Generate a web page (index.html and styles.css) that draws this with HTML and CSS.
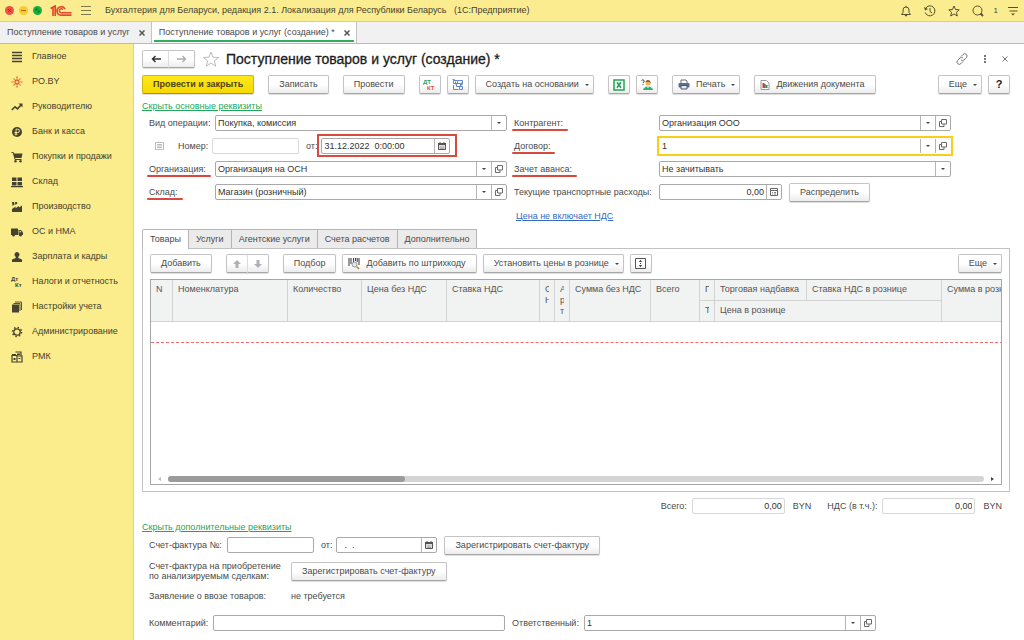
FILE: index.html
```html
<!DOCTYPE html>
<html lang="ru">
<head>
<meta charset="utf-8">
<title>Поступление товаров и услуг (создание) *</title>
<link rel="stylesheet" href="styles.css">
</head>
<body>
<svg class="sprite" aria-hidden="true">
  <symbol id="i-open" viewBox="0 0 8 8"><path d="M2.500 .5h5v4.500h-5zM2.500 2.500h-2v5h4.500V5" fill="none" stroke="#6a6a6a"/></symbol>
  <symbol id="i-cal" viewBox="0 0 8 8"><path d="M.5 1.500h7v6h-7z" fill="#ddd" stroke="#555"/><path d="M0 1h8v2H0zM1.500 0h1v1h-1zM5.500 0h1v1h-1z" fill="#555"/><path d="M2 5h4M2 6.500h4" stroke="#888" stroke-width=".6"/></symbol>
  <symbol id="i-calc" viewBox="0 0 8 8"><path d="M.5 .5h7v7h-7zM.5 2.500h7" fill="none" stroke="#666"/><path d="M2 4.500h1M4 4.500h2M2 6h1M4 6h2" stroke="#666" stroke-width=".8"/></symbol>
</svg>

<header class="topbar">
  <div class="lights">
    <svg width="9" height="9" viewBox="0 0 9 9"><circle cx="4.500" cy="4.500" r="4.500" fill="#ee5244"/><path d="M3 3l3 3M6 3l-3 3" stroke="#a92c22"/></svg>
    <svg width="9" height="9" viewBox="0 0 9 9"><circle cx="4.500" cy="4.500" r="4.500" fill="#f5cb30"/><path d="M2 4.500h5" stroke="#b5651d"/></svg>
    <svg width="9" height="9" viewBox="0 0 9 9"><circle cx="4.500" cy="4.500" r="4.500" fill="#16b03c"/><path d="M3 3h1.500M3 3v1.500M6 6H4.500M6 6V4.500" stroke="#0a5a1c"/></svg>
  </div>
  <svg class="logo" viewBox="0 0 22 12" aria-label="1С"><g fill="none" stroke="#e5482f"><path d="M.5 3.500L3 2.200V11M5.200 11V1L3 2.200" stroke-width="1.700"/><path d="M15 4.200A4.200 4.200 0 1 0 11 10.200H21.500" stroke-width="1.700"/><path d="M12.900 4.600A2 2 0 1 0 11 7.800H21.500" stroke-width="1.500"/></g></svg>
  <button class="plain" aria-label="Меню"><svg width="10" height="9" viewBox="0 0 10 9"><path d="M0 .5h10M0 4.500h10M0 8.500h10" stroke="#7d794e"/></svg></button>
  <span class="app-title">Бухгалтерия для Беларуси, редакция 2.1. Локализация для Республики Беларусь &nbsp; (1С:Предприятие)</span>
  <div class="top-tools">
    <button class="plain" aria-label="Уведомления"><svg width="12" height="12" viewBox="0 0 12 12"><path d="M1.500 9.500L3 7.500V5a3 3 0 0 1 6 0v2.500l1.500 2zM6 2V.8" fill="none" stroke="#55512f"/><path d="M4.500 10h3L6 11.800z" fill="#55512f"/></svg></button>
    <button class="plain" aria-label="История"><svg width="12" height="12" viewBox="0 0 12 12"><path d="M1.500 3.500A5 5 0 1 1 1.200 7.500M6 3v3.500l2 1.500" fill="none" stroke="#55512f"/><path d="M0 2l1 3.500 3-1.500z" fill="#55512f"/></svg></button>
    <button class="plain" aria-label="Избранное"><svg width="12" height="12" viewBox="0 0 12 12"><path d="M6 1l1.500 3.500 3.700.3-2.800 2.500.9 3.700L6 9l-3.300 2 .9-3.700L.8 4.800l3.700-.3z" fill="none" stroke="#55512f"/></svg></button>
    <button class="plain" aria-label="Поиск"><svg width="12" height="12" viewBox="0 0 12 12"><circle cx="5.500" cy="5.500" r="4.500" fill="none" stroke="#55512f"/><path d="M8.500 8.500l2.500 2.500" stroke="#55512f" stroke-width="2"/></svg></button>
    <span class="count">1</span>
    <button class="plain" aria-label="Сервис"><svg width="10" height="10" viewBox="0 0 10 10"><path d="M0 1.500h10M1.500 5h8" stroke="#55512f"/><path d="M3 7.500h4L5 9.500z" fill="#55512f"/></svg></button>
  </div>
</header>

<nav class="windows">
  <div class="window"><a href="#">Поступление товаров и услуг</a><button class="close" aria-label="Закрыть"><svg width="6" height="6" viewBox="0 0 6 6"><path d="M.5 .5l5 5M5.500 .5l-5 5" stroke="#555" stroke-width="1.500"/></svg></button></div>
  <div class="window current"><a href="#">Поступление товаров и услуг (создание) *</a><button class="close" aria-label="Закрыть"><svg width="6" height="6" viewBox="0 0 6 6"><path d="M.5 .5l5 5M5.500 .5l-5 5" stroke="#555" stroke-width="1.500"/></svg></button></div>
</nav>

<div class="workspace">
<nav class="sections">
  <a href="#"><svg viewBox="0 0 12 12"><path d="M1 1.500h10M1 4.500h10M1 7.500h10M1 10.500h10" stroke="#454232" stroke-width="1.400"/></svg>Главное</a>
  <a href="#"><svg viewBox="0 0 12 12"><path d="M6 5V.5M6 7v4.500M5 6H.5M7 6h4.500M5.200 5.200L2.500 2.500M6.800 5.200l2.700-2.700M5.200 6.800L2.500 9.500M6.800 6.800l2.700 2.700" stroke="#e5532d" stroke-width="1.200" stroke-dasharray="2.600 .5"/></svg>PO.BY</a>
  <a href="#"><svg viewBox="0 0 12 12"><path d="M.8 9L4 5.800l2.500 2L10 4" fill="none" stroke="#454232" stroke-width="1.600"/><path d="M7.500 2.500H11.500V6.500z" fill="#454232"/></svg>Руководителю</a>
  <a href="#"><svg viewBox="0 0 12 12"><circle cx="6" cy="6" r="5" fill="#454232"/><path d="M5 9.500V3.200h1.800a1.500 1.500 0 0 1 0 3.300H3.500M3.500 8h3" fill="none" stroke="#fbed8b" stroke-width=".9"/></svg>Банк и касса</a>
  <a href="#"><svg viewBox="0 0 12 12"><path d="M.5 1.500h1.800L4 8.500h6.500" fill="none" stroke="#454232"/><path d="M2.500 2.500H11.500L10.500 7H3.500z" fill="#454232"/><circle cx="4.500" cy="10.300" r="1.200" fill="#454232"/><circle cx="9.500" cy="10.300" r="1.200" fill="#454232"/></svg>Покупки и продажи</a>
  <a href="#"><svg viewBox="0 0 12 12"><path d="M1 1.500h4.500v3.500H1zM6.500 1.500H11v3.500H6.500zM1 6h4.500v3.500H1zM6.500 6H11v3.500H6.500zM0 10h12v1.200H0z" fill="#454232"/></svg>Склад</a>
  <a href="#"><svg viewBox="0 0 12 12"><path d="M1 11V8L4.500 5.500v1.700L8 5V6.500l3-2V11zM1 1h2l.5 2.500L1.500 5zM4 1h2l.3 1.500L4.300 4z" fill="#454232"/></svg>Производство</a>
  <a href="#"><svg viewBox="0 0 12 12"><path d="M0 2.500h7V9H0zM7.500 4h2.500l2 2.500V9H7.500z" fill="#454232"/><circle cx="2.500" cy="9.300" r="1.300" fill="#454232"/><circle cx="9.500" cy="9.300" r="1.300" fill="#454232"/><path d="M8.500 5h1l1 1.300h-2z" fill="#fbed8b"/></svg>ОС и НМА</a>
  <a href="#"><svg viewBox="0 0 12 12"><path d="M6 1a2.400 2.600 0 0 1 1.300 4.800V7L11 8.500V11H1V8.500L4.700 7V5.800A2.400 2.600 0 0 1 6 1z" fill="#454232"/></svg>Зарплата и кадры</a>
  <a href="#"><svg viewBox="0 0 12 12"><text x="0" y="5" class="dk">Дт</text><text x="4" y="11" class="dk">Кт</text></svg>Налоги и отчетность</a>
  <a href="#"><svg viewBox="0 0 12 12"><path d="M1 3.500h7V11.500H1z" fill="#454232"/><path d="M2.500 2.500H9V10M4 1h6.500V9" fill="none" stroke="#454232" stroke-width=".9"/></svg>Настройки учета</a>
  <a href="#"><svg viewBox="0 0 12 12"><circle cx="6" cy="6" r="3.200" fill="none" stroke="#454232" stroke-width="1.300"/><circle cx="6" cy="6" r="4.500" fill="none" stroke="#454232" stroke-width="1.500" stroke-dasharray="1.500 2.030"/></svg>Администрирование</a>
  <a href="#"><svg viewBox="0 0 12 12"><path d="M1 4.500h5v6.500H1zM4.500 1H10v3.500M6 5h5v6H6z" fill="none" stroke="#454232" stroke-width="1.200"/><path d="M1 3h4v2H1zM2.500 7h2v2h-2zM6 2.500h3v1.500H6zM7.500 7h2v1h-2z" fill="#454232"/></svg>РМК</a>
</nav>

<main class="doc">
  <div class="title-row">
    <div class="pair"><button class="btn" aria-label="Назад"><svg width="10" height="8" viewBox="0 0 10 8"><path d="M10 4H2M4.500 1L1.500 4l3 3" fill="none" stroke="#333" stroke-width="1.500"/></svg></button><button class="btn" aria-label="Вперед"><svg width="10" height="8" viewBox="0 0 10 8"><path d="M0 4h8M5.500 1l3 3-3 3" fill="none" stroke="#aaa" stroke-width="1.300"/></svg></button></div>
    <button class="plain" aria-label="В избранное"><svg width="18" height="16" viewBox="0 0 18 16"><path d="M9 1l2 5.200 5.600.3-4.300 3.400 1.500 5.300L9 12.100l-4.800 3.100 1.500-5.300L1.400 6.500 7 6.200z" fill="none" stroke="#bbb"/></svg></button>
    <h1>Поступление товаров и услуг (создание) *</h1>
    <div class="title-tools">
      <button class="plain" aria-label="Ссылка"><svg width="12" height="12" viewBox="0 0 12 12"><g fill="none" stroke="#777"><path d="M5 3.500l2-2a2.200 2.200 0 0 1 3.500 3L8 7a2.200 2.200 0 0 1-3 0"/><path d="M7 8.500l-2 2a2.200 2.200 0 0 1-3.500-3L4 5a2.200 2.200 0 0 1 3 0"/></g></svg></button>
      <button class="plain" aria-label="Еще"><svg width="2" height="8" viewBox="0 0 2 8"><path d="M0 0h2v2H0zM0 3h2v2H0zM0 6h2v2H0z" fill="#777"/></svg></button>
      <button class="plain" aria-label="Закрыть"><svg width="6" height="6" viewBox="0 0 6 6"><path d="M.5 .5l5 5M5.500 .5l-5 5" stroke="#777"/></svg></button>
    </div>
  </div>

  <div class="commands">
    <button class="btn primary">Провести и закрыть</button>
    <button class="btn">Записать</button>
    <button class="btn">Провести</button>
    <div class="group">
      <button class="btn icon" aria-label="Дт Кт"><svg width="13" height="12" viewBox="0 0 13 12"><text x="0" y="5" class="dk dt">ДТ</text><text x="4" y="11" class="dk kt">КТ</text></svg></button>
      <button class="btn icon" aria-label="Структура"><svg width="12" height="12" viewBox="0 0 12 12"><g fill="none" stroke="#5f88cc"><path d="M1.500 1.500h4v3h-4zM4.500 4.500h4v3h-4zM7.500 7.500h3v3h-3zM5.500 1.500h5v4M1.500 6v4.500h5M.5 .5h2M3.500 2.500v3M9.500 3.500v3"/></g></svg></button>
      <button class="btn menu">Создать на основании</button>
    </div>
    <div class="group">
      <button class="btn icon" aria-label="Excel"><svg width="12" height="12" viewBox="0 0 12 12"><path d="M1 1h10v10H1z" fill="#fff" stroke="#21a556" stroke-width="1.500"/><path d="M4 3.200l4 5.600M8 3.200L4 8.800" stroke="#21a556" stroke-width="1.700"/></svg></button>
      <button class="btn icon" aria-label="Консультант"><svg width="12" height="12" viewBox="0 0 12 12"><path d="M.5 1.500Q2 0 3 1.500T2 3.500V4M2 5v1" fill="none" stroke="#444"/><circle cx="7" cy="4" r="2.600" fill="#f1b45b"/><path d="M4.500 3a2.600 2.600 0 0 1 5 0L10 4.500 8.500 3z" fill="#8b5a2b"/><path d="M2 11Q3 7.500 7 7.500T12 11z" fill="#2fae70"/><path d="M6 7.500h2L7 9.500z" fill="#fff"/></svg></button>
    </div>
    <button class="btn menu tight"><svg width="12" height="11" viewBox="0 0 12 11"><path d="M3 4V1h5l1 1v2" fill="#fff" stroke="#667"/><rect x=".5" y="4" width="11" height="4.500" rx="1" fill="#5f6c8a"/><path d="M3 6.500h6V10H3z" fill="#dfe8f7" stroke="#556"/></svg>Печать</button>
    <button class="btn tight"><svg width="10" height="10" viewBox="0 0 10 10"><path d="M1 .5h5.500l2.500 2.500v6.500h-8z" fill="#fff" stroke="#999"/><path d="M2.500 3h2v5h-2z" fill="#d33"/><path d="M4.500 4h1v4h-1z" fill="#333"/><path d="M5.500 5h2v3h-2z" fill="#2a9d4a"/></svg>Движения документа</button>
    <div class="group end"><button class="btn menu">Еще</button><button class="btn icon help">?</button></div>
  </div>

  <a class="toggle" href="#">Скрыть основные реквизиты</a>

  <div class="form">
    <div class="col left">
      <div class="row"><label for="op" class="lab">Вид операции:</label><div class="field grow"><select id="op"><option>Покупка, комиссия</option></select><span class="drop"></span></div></div>
      <div class="row">
        <svg class="state" width="9" height="8" viewBox="0 0 9 8"><path d="M.5 .5h8v7h-8zM2 2.500h5M2 4h5M2 5.500h5" fill="none" stroke="#aaa" stroke-width=".8"/></svg>
        <label for="num" class="lab num">Номер:</label><div class="field light number"><input id="num" type="text"></div>
        <label for="date" class="from">от:</label>
        <div class="field date marked"><input id="date" type="text" value="31.12.2022  0:00:00"><button aria-label="Календарь"><svg width="8" height="8"><use href="#i-cal"/></svg></button></div>
      </div>
      <div class="row"><label for="org" class="lab"><span class="must">Организация:</span></label><div class="field grow"><input id="org" type="text" value="Организация на ОСН"><button class="drop" aria-label="Выбрать"></button><button aria-label="Открыть"><svg width="8" height="8"><use href="#i-open"/></svg></button></div></div>
      <div class="row"><label for="wh" class="lab"><span class="must">Склад:</span></label><div class="field grow"><input id="wh" type="text" value="Магазин (розничный)"><button class="drop" aria-label="Выбрать"></button><button aria-label="Открыть"><svg width="8" height="8"><use href="#i-open"/></svg></button></div></div>
    </div>
    <div class="col right">
      <div class="row"><label for="agent" class="lab"><span class="must">Контрагент:</span></label><div class="field grow"><input id="agent" type="text" value="Организация ООО"><button class="drop" aria-label="Выбрать"></button><button aria-label="Открыть"><svg width="8" height="8"><use href="#i-open"/></svg></button></div></div>
      <div class="row"><label for="contract" class="lab"><span class="must">Договор:</span></label><div class="field grow focused"><input id="contract" type="text" value="1"><button class="drop" aria-label="Выбрать"></button><button aria-label="Открыть"><svg width="8" height="8"><use href="#i-open"/></svg></button></div></div>
      <div class="row"><label for="adv" class="lab"><span class="must">Зачет аванса:</span></label><div class="field grow"><select id="adv"><option>Не зачитывать</option></select><span class="drop"></span></div></div>
      <div class="row"><label for="cost" class="lab">Текущие транспортные расходы:</label><div class="field cost"><input id="cost" type="text" class="amount" value="0,00"><button aria-label="Калькулятор"><svg width="8" height="8"><use href="#i-calc"/></svg></button></div><button class="btn">Распределить</button></div>
      <a class="price-link" href="#">Цена не включает НДС</a>
    </div>
  </div>

  <div class="tabs" role="tablist">
    <button role="tab" aria-selected="true">Товары</button><button role="tab">Услуги</button><button role="tab">Агентские услуги</button><button role="tab">Счета расчетов</button><button role="tab">Дополнительно</button>
  </div>
  <section class="panel">
    <div class="commands grid-tools">
      <button class="btn">Добавить</button>
      <div class="pair small"><button class="btn" aria-label="Вверх"><svg width="8" height="8" viewBox="0 0 8 8"><path d="M4 0l4 4H5.500v4h-3V4H0z" fill="#aeb2b6"/></svg></button><button class="btn" aria-label="Вниз"><svg width="8" height="8" viewBox="0 0 8 8"><path d="M4 8l4-4H5.500V0h-3v4H0z" fill="#aeb2b6"/></svg></button></div>
      <div class="group">
        <button class="btn">Подбор</button>
        <button class="btn tight"><svg width="12" height="12" viewBox="0 0 12 12"><path d="M1 0v8M3 0v6M5.500 0v4M7.500 0v3M9.200 0v4M11 0v7" stroke="#444" stroke-width="1.100"/><circle cx="6.500" cy="6.500" r="2.500" fill="#dde6f0" stroke="#999"/><path d="M8.500 8.500l2.500 2.500" stroke="#b98042" stroke-width="1.500"/></svg>Добавить по штрихкоду</button>
        <button class="btn menu">Установить цены в рознице</button>
        <button class="btn icon" aria-label="Высота строк"><svg width="11" height="11" viewBox="0 0 11 11"><path d="M.5 .5h10v10H.5z" fill="none" stroke="#555"/><path d="M5.500 1.800L7.200 4H3.800zM5.500 9.200L7.200 7H3.800zM5 5h1v1H5z" fill="#444"/></svg></button>
      </div>
      <div class="group end"><button class="btn menu">Еще</button></div>
    </div>
    <div class="grid">
      <div class="clip">
      <table>
        <colgroup><col class="w22"><col class="w115"><col class="w74"><col class="w85"><col class="w93"><col class="w15"><col class="w15"><col class="w81"><col class="w49"><col class="w15"><col class="w92"><col class="w135"><col class="w81"></colgroup>
        <thead>
          <tr><th rowspan="2">N</th><th rowspan="2">Номенклатура</th><th rowspan="2">Количество</th><th rowspan="2">Цена без НДС</th><th rowspan="2">Ставка НДС</th><th rowspan="2"><div class="cut">С<br>Н</div></th><th rowspan="2"><div class="cut">А<br>р<br>т</div></th><th rowspan="2">Сумма без НДС</th><th rowspan="2">Всего</th><th><div class="cut">Г</div></th><th>Торговая надбавка</th><th>Ставка НДС в рознице</th><th rowspan="2">Сумма в рознице</th></tr>
          <tr><th><div class="cut">Т</div></th><th colspan="2">Цена в рознице</th></tr>
        </thead>
        <tbody><tr><td colspan="13"></td></tr></tbody>
      </table>
      </div>
      <div class="scroll"><i class="arr prev"></i><div class="track"><div class="thumb"></div></div><i class="arr next"></i></div>
    </div>
  </section>

  <div class="totals">
    <label for="sum">Всего:</label><div class="field light total"><input id="sum" class="amount" type="text" value="0,00" readonly></div><span class="cur">BYN</span>
    <label for="vat">НДС (в т.ч.):</label><div class="field light total"><input id="vat" class="amount" type="text" value="0,00" readonly></div><span class="cur last">BYN</span>
  </div>

  <a class="toggle second" href="#">Скрыть дополнительные реквизиты</a>

  <div class="extra">
    <div class="row"><label for="inv" class="inv-label">Счет-фактура №:</label><div class="field number"><input id="inv" type="text"></div><label for="invd" class="inv-from">от:</label><div class="field inv-date"><input id="invd" type="text" value="  .  ."><button aria-label="Календарь"><svg width="8" height="8"><use href="#i-cal"/></svg></button></div><button class="btn reg">Зарегистрировать счет-фактуру</button></div>
    <div class="row two"><span class="wide-label">Счет-фактура на приобретение<br>по анализируемым сделкам:</span><button class="btn reg">Зарегистрировать счет-фактуру</button></div>
    <div class="row import"><span class="wide-label">Заявление о ввозе товаров:</span><span>не требуется</span></div>
    <div class="row bottom"><label for="note" class="note-label">Комментарий:</label><div class="field note"><input id="note" type="text"></div><label for="resp" class="resp-label">Ответственный:</label><div class="field resp"><input id="resp" type="text" value="1"><button class="drop" aria-label="Выбрать"></button><button aria-label="Открыть"><svg width="8" height="8"><use href="#i-open"/></svg></button></div></div>
  </div>
</main>
</div>
</body>
</html>
```

FILE: styles.css
```css
* { box-sizing: border-box; }
body { margin: 0; min-height: 100vh; display: flex; flex-direction: column; background: #fff; color: #4a4a4a; font: 9px/11px "Liberation Sans", Arial, sans-serif; }
button, input, select { font: inherit; color: inherit; }
a { color: inherit; text-decoration: none; }
.sprite { position: absolute; width: 0; height: 0; }
svg { flex: none; }
.plain { display: flex; padding: 0; border: 0; background: none; }
.dk { font: bold 6px "Liberation Sans", sans-serif; fill: #454232; }
.dt { fill: #1fa65a; }
.kt { fill: #e2533f; }

.topbar { display: flex; align-items: center; height: 22px; padding: 0 6px 0 5px; background: #fbed8f; border-bottom: 1px solid #d9cf86; color: #45422f; }
.lights { display: flex; gap: 5px; margin-right: 8px; }
.logo { width: 22px; height: 12px; margin-right: 9px; }
.app-title { margin-left: 14px; white-space: nowrap; }
.top-tools { display: flex; align-items: center; gap: 12px; margin-left: auto; }
.count { font-size: 8px; margin: 0 -2px; }

.windows { display: flex; height: 22px; background: #f1f1f1; border-bottom: 1px solid #b9b9b9; }
.window { display: flex; align-items: center; gap: 9px; padding: 0 6px 0 7px; border-right: 1px solid #c4c4c4; white-space: nowrap; }
.current { position: relative; background: #fff; }
.current::after { content: ""; position: absolute; left: 2px; right: 2px; bottom: 1px; height: 2px; background: #2fae60; }
.close { display: flex; padding: 0; border: 0; background: none; }

.workspace { display: flex; flex: 1; }
.sections { flex: none; width: 134px; background: #fbed8b; border-right: 1px solid #d8d0a0; }
.sections a { display: flex; align-items: center; gap: 9px; height: 25px; padding-left: 11px; color: #45422f; white-space: nowrap; }
.sections svg { width: 12px; height: 12px; }

.doc { flex: 1; min-width: 0; padding: 6px 14px 8px 8px; }
.title-row { display: flex; align-items: center; height: 18px; }
h1 { margin: 0 0 0 6px; font-size: 14px; line-height: 18px; font-weight: normal; color: #1c1c1c; -webkit-text-stroke: 0.3px #1c1c1c; white-space: nowrap; }
.title-tools { display: flex; align-items: center; gap: 16px; margin-left: auto; padding-right: 2px; }
.pair { display: flex; margin-right: 7px; }
.pair .btn { width: 27px; height: 18px; padding: 0; }
.pair .btn:first-child { border-radius: 2px 0 0 2px; }
.pair .btn:last-child { margin-left: -1px; border-radius: 0 2px 2px 0; border-left-color: #ddd; }
.pair.small { margin: 0; }
.pair.small .btn { width: 22px; height: 19px; }

.btn { display: inline-flex; align-items: center; justify-content: center; gap: 6px; height: 19px; padding: 0 10px; border: 1px solid #c4c4c4; border-bottom-color: #a6a6a6; border-radius: 2px; background: linear-gradient(#fff 50%, #ececec); box-shadow: 0 1px 1px #ddd; white-space: nowrap; }
.primary { border-color: #cfb416; border-bottom-color: #a8920f; background: linear-gradient(#ffe81a, #f7d800); font-weight: bold; color: #4c4517; }
.icon { width: 22px; padding: 0; }
.menu { padding-right: 4px; }
.menu::after { content: ""; border: 2px solid transparent; border-top-color: #444; border-bottom: 0; }
.tight { padding-left: 5px; }
.help { font-weight: bold; font-size: 11px; color: #222; }
.commands { display: flex; align-items: center; gap: 14px; margin-top: 7px; }
.group { display: flex; gap: 6px; }
.end { margin-left: auto; }

.toggle { display: block; width: max-content; margin-top: 7px; color: #22a75a; text-decoration: underline; }
.form { display: flex; gap: 7px; margin-top: 3px; padding-right: 59px; }
.col { display: flex; flex-direction: column; gap: 7px; min-width: 0; }
.left { flex: 365 1 0; }
.right { flex: 437 1 0; }
.row { display: flex; align-items: center; height: 16px; white-space: nowrap; }
.left .lab { flex: none; width: 73px; padding-left: 7px; }
.right .lab { flex: none; width: 145px; }
.left .num { width: 34px; padding-left: 0; }
.state { margin: 0 14px 0 13px; }
.field { display: flex; height: 16px; border: 1px solid #a9a9a9; border-radius: 2px; background: #fff; color: #333; }
.field input, .field select { flex: 1; width: 0; min-width: 0; padding: 0 2px; border: 0; outline: 0; background: none; appearance: none; white-space: pre; }
.field button, .field .drop { display: flex; align-items: center; justify-content: center; flex: none; width: 15px; padding: 0; border: 0; border-left: 1px solid #b5b5b5; background: none; }
.drop::after { content: ""; border: 2px solid transparent; border-top-color: #444; border-bottom: 0; }
.field .amount { text-align: right; }
.grow { flex: 1; }
.light.field { border-color: #d8d8d8; }
.field.number { width: 87px; }
.from { margin: 0 4px 0 7px; }
.date { position: relative; width: 129px; }
.marked::after { content: ""; position: absolute; inset: -5px -8px -4px -5px; border: 2px solid #d9493f; pointer-events: none; }
.must { position: relative; }
.must::after { content: ""; position: absolute; left: -2px; right: -5px; bottom: -3px; height: 2px; border-radius: 1px; background: #d9493f; }
.focused { outline: 2px solid #f7cf17; border-color: transparent; border-radius: 0; }
.cost { width: 123px; margin-right: 7px; }
.price-link { width: max-content; margin: 4px 0 0 2px; color: #356ac0; text-decoration: underline; }

.tabs { display: flex; margin-top: 7px; }
.tabs button { height: 19px; padding: 0 7px; margin-right: -1px; border: 1px solid #b5b5b5; border-bottom: 0; background: #ebebeb; }
.tabs button[aria-selected] { position: relative; height: 20px; margin-bottom: -1px; background: #fff; border-radius: 2px 0 0 0; }
.panel { padding: 5px 7px 6px; border: 1px solid #c2c2c2; }
.grid-tools { margin-top: 0; }
.grid { display: flex; flex-direction: column; height: 206px; margin-top: 6px; border: 1px solid #a5a5a5; }
.clip { flex: 1; overflow: hidden; }
table { width: 872px; table-layout: fixed; border-collapse: separate; border-spacing: 0; }
.w22 { width: 22px; } .w115 { width: 115px; } .w74 { width: 74px; } .w85 { width: 85px; } .w93 { width: 93px; } .w15 { width: 15px; } .w81 { width: 81px; } .w49 { width: 49px; } .w92 { width: 92px; } .w135 { width: 135px; }
th { height: 21px; padding: 4px 0 0 5px; border-right: 1px solid #d2d2d2; border-bottom: 1px solid #d2d2d2; background: #f1f2f2; font-weight: normal; text-align: left; vertical-align: top; white-space: nowrap; color: #555; }
.cut { width: 4px; overflow: hidden; }
td { height: 21px; padding: 0; border-bottom: 1px dashed #f26a6a; }
.scroll { display: flex; align-items: center; gap: 7px; height: 11px; padding: 0 7px; }
.track { flex: 1; height: 6px; border-radius: 3px; background: #d4d4d4; }
.thumb { width: 29%; height: 6px; border-radius: 3px; background: #9b9b9b; }
.arr { border: 2px solid transparent; }
.prev { border-left: 0; border-right: 3px solid #bbb; }
.next { border-right: 0; border-left: 3px solid #444; }

.totals { display: flex; align-items: center; justify-content: flex-end; margin-top: 6px; padding-right: 8px; }
.field.total { width: 93px; margin: 0 8px 0 5px; }
.cur { margin-right: 16px; }
.last { margin-right: 0; }
.second { margin-top: 8px; }
.extra { margin-top: 4px; padding-left: 7px; }
.inv-label { width: 78px; }
.inv-from { margin: 0 4px 0 7px; }
.inv-date { width: 101px; margin-right: 7px; }
.row.two { height: 22px; margin-top: 7px; line-height: 10px; }
.wide-label { width: 142px; }
.row.import { margin-top: 6px; }
.row.bottom { margin-top: 11px; }
.note-label { width: 64px; }
.note { flex: 292 1 0; }
.resp-label { margin: 0 5px 0 7px; }
.resp { flex: 292 1 0; margin-right: 134px; }
```
